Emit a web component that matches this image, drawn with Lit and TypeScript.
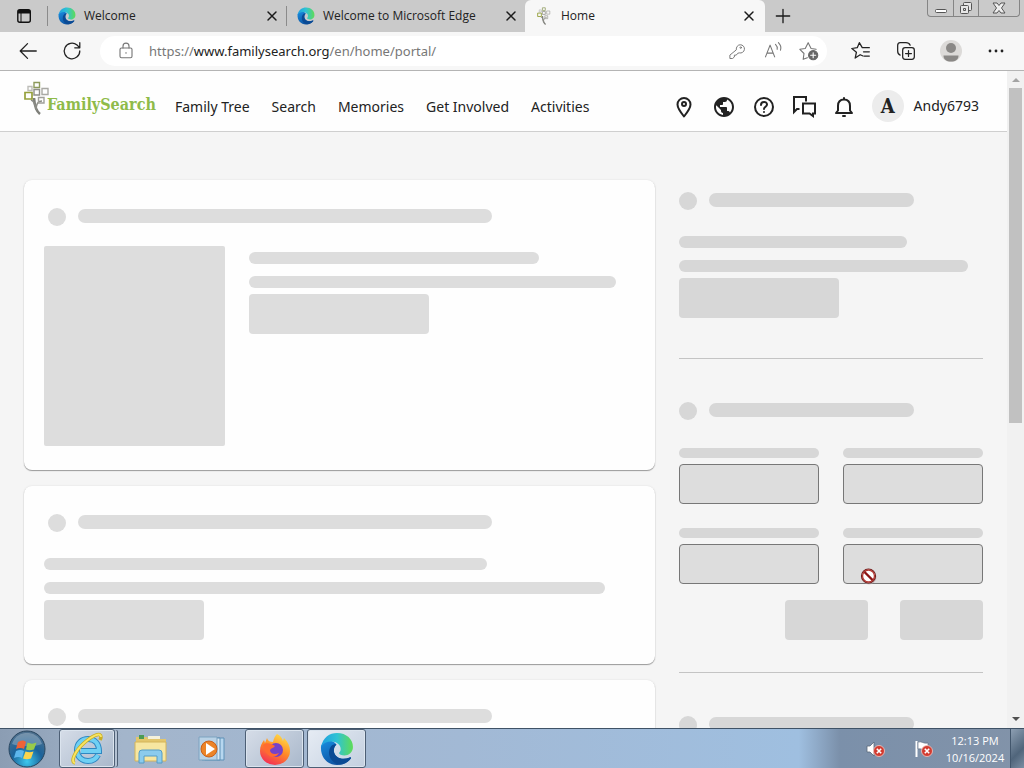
import { LitElement, html, css, svg } from "lit";
import { customElement, property } from "lit/decorators.js";

const edgeLogo = (size: number) => html`<svg width=${size} height=${size} viewBox="0 0 32 32" aria-hidden="true">
  <defs>
    <linearGradient id="ea" x1="0" y1="0.3" x2="1" y2="0.3"><stop offset="0" stop-color="#1f9fe0"/><stop offset=".5" stop-color="#2fc3d4"/><stop offset="1" stop-color="#5fdc55"/></linearGradient>
    <linearGradient id="eb" x1="0" y1="0" x2="0.6" y2="1"><stop offset="0" stop-color="#1a8ee0"/><stop offset="1" stop-color="#0c4f9e"/></linearGradient>
  </defs>
  <path fill="url(#eb)" d="M1 13C0 24 7 31 16 31c6 0 10-2 13-6 .5-1-.3-1.4-1-1-7 3-14 0-15-6-.4-3 1-5 2.500-6C13 7 4 6 1 13z"/>
  <path fill="#0a4a94" d="M10 14c-4 6 0 16 9 16.700 5-.7 8-3 10-5.700.5-1-.3-1.400-1-1-8 3-14 0-15-6 0-3 1-5 2.500-6-2-1-4 0-5.500 2z"/>
  <path fill="url(#ea)" d="M1 14C3 5 9 1 16 1c9 0 15 6 15 13 0 5-4 8-8 8-3 0-5-1-5-2s1.500-1.500 1.500-4c0-4-4-7-9-7-4 0-7.500 1.500-9.500 5z"/>
</svg>`;

const treeMark = (w: number, h: number) => html`<svg width=${w} height=${h} viewBox="0 0 26 34" fill="none" aria-hidden="true">
  <path d="M10 17c.5 7 2 13 6 16" stroke="#7e7f79" stroke-width="2.600"/>
  <path d="M18 20c-4 0-6 3-6 9M7 19c3 1 4 4 5 8" stroke="#8b8c86" stroke-width="1.500"/>
  <g stroke-width="1.400">
    <path d="M10 1.500h5.500v5H10z" stroke="#8d9a5b"/>
    <path d="M4 5.500h4v4H4z" stroke="#bdbdb8"/>
    <path d="M10 8.500h5.500v5.500H10z" stroke="#8f8f88"/>
    <path d="M18 7.500h6v6h-6z" stroke="#a9a9a4"/>
    <path d="M1 11.500h7v6.500H1z" stroke="#95a03b" stroke-width="1.700"/>
    <path d="M14.500 16.500h5.500V22h-5.500z" stroke="#a0a09a"/>
  </g>
</svg>`;

const line = (size: number, body: unknown, width = "1.2") => html`<svg width=${size} height=${size} viewBox="0 0 24 24" fill="none"
  stroke="currentColor" stroke-width=${width} stroke-linecap="round" stroke-linejoin="round" aria-hidden="true">${body}</svg>`;

const badX = svg`<circle cx="14" cy="12" r="5.500" fill="#d23b30" stroke="#f3c9c4" stroke-width=".8"/><path d="m11.800 9.800 4.400 4.400m0-4.400-4.400 4.400" stroke="#fff" stroke-width="1.600"/>`;

@customElement("browser-tabs")
class BrowserTabs extends LitElement {
  static styles = css`
    :host { display: block; background: #cacaca; }
    .strip { display: flex; height: 32px; position: relative; }
    .workspace { width: 47px; display: grid; place-items: center; }
    button { border: 0; padding: 0; background: none; color: #1b1b1b; display: grid; place-items: center; font: inherit; }
    .tab { flex: 0 1 239px; display: flex; align-items: center; gap: 8px; padding: 0 6px 0 10px; box-sizing: border-box; color: #222; border-left: 1px solid #8b8b8b; border-image: linear-gradient(transparent 20%, #8b8b8b 20% 80%, transparent 80%) 1; }
    .tab.active { background: #f7f7f7; border: 0; border-radius: 6px 6px 0 0; flex-basis: 240px; padding: 0 8px 0 10px; }
    .title { flex: 1; font: 12px/16px "Open Sans", "Noto Sans", sans-serif; white-space: nowrap; }
    .new { width: 36px; }
    .window { position: absolute; right: 4px; top: 0; display: flex; border: 1px solid #858585; border-top: 0; border-radius: 0 0 4px 4px; color: #555; height: 16px; }
    .window button { width: 25px; color: #555; }
    .window button + button { border-left: 1px solid #858585; }
    .window .shut { width: 41px; }
  `;
  render() {
    const close = line(16, svg`<path d="M6 6l12 12M18 6 6 18"/>`, "2.2");
    const tab = (title: string, icon: unknown, active = false) => html`
      <div class="tab ${active ? "active" : ""}" role="tab" aria-selected=${active}>
        ${icon}<span class="title">${title}</span><button aria-label="Close ${title}">${close}</button>
      </div>`;
    return html`<div class="strip" role="tablist">
      <button class="workspace" aria-label="Tab actions">
        <svg width="16" height="16" viewBox="0 0 16 16"><rect x="1.800" y="1.800" width="12.500" height="12.500" rx="2" fill="none" stroke="#111" stroke-width="1.400"/><path d="M2 2h12v3.500H2z" fill="#111"/><path d="M5 5v9" stroke="#111"/></svg>
      </button>
      ${tab("Welcome", edgeLogo(18))}
      ${tab("Welcome to Microsoft Edge", edgeLogo(18))}
      ${tab("Home", treeMark(18, 18), true)}
      <button class="new" aria-label="New tab">${line(20, svg`<path d="M12 4v16M4 12h16"/>`, "1.6")}</button>
      <div class="window">
        <button aria-label="Minimize"><svg width="14" height="14" viewBox="0 0 14 14" fill="#fff" stroke="#555"><rect x="1.500" y="8.500" width="11" height="3" rx="1"/></svg></button>
        <button aria-label="Restore"><svg width="14" height="14" viewBox="0 0 14 14" fill="#e6e6e6" stroke="#555"><rect x="4.500" y="1.500" width="8" height="8" rx="1"/><rect x="1.500" y="4.500" width="8" height="8" rx="1"/><path d="M4.500 7.500h2v2h-2z"/></svg></button>
        <button class="shut" aria-label="Close window"><svg width="14" height="14" viewBox="0 0 14 14" fill="#eee" stroke="#555"><path d="M1 2h4l2 2.500L9 2h4L9.500 7l3.500 5H9L7 9.500 5 12H1l3.500-5z"/></svg></button>
      </div>
    </div>`;
  }
}

@customElement("browser-toolbar")
class BrowserToolbar extends LitElement {
  static styles = css`
    :host { display: block; background: #f7f7f7; border-bottom: 1px solid #b4b4b4; }
    .bar { display: flex; align-items: center; height: 38px; padding-left: 16px; }
    button { border: 0; padding: 0; background: none; color: #222; display: grid; place-items: center; width: 24px; height: 24px; }
    .nav { display: flex; gap: 20px; }
    .address { flex: 1; display: flex; align-items: center; background: #fff; border-radius: 15px; height: 30px; margin-left: 16px; padding: 0 6px 0 14px; position: relative; }
    .address button { color: #777; }
    .field { flex: 1; position: relative; height: 20px; margin-left: 11px; font: 13px/20px "Noto Sans", "Open Sans", sans-serif; }
    .field input { width: 100%; box-sizing: border-box; height: 20px; border: 0; padding: 0; outline: 0; background: transparent; font: inherit; color: transparent; }
    .url { position: absolute; inset: 0; color: #777; white-space: nowrap; pointer-events: none; }
    .url b { color: #222; font-weight: 400; }
    .inner { display: flex; gap: 12px; }
    .tools { display: flex; gap: 21px; margin: 0 16px 0 22px; }
  `;
  render() {
    return html`<div class="bar">
      <div class="nav">
        <button aria-label="Back">${line(22, svg`<path d="M21 12H4m7.500-8L3.500 12l8 8"/>`, "1.4")}</button>
        <button aria-label="Refresh">${line(22, svg`<path d="M20.500 12a8.500 8.500 0 1 1-3-6.500L20 8m.5-5v5.500H15"/>`, "1.4")}</button>
      </div>
      <div class="address">
        <button aria-label="Site information">${line(18, svg`<rect x="4" y="8" width="16" height="13" rx="2"/><path d="M8 8V5.500a4 4 0 0 1 8 0V8M12 14v1"/>`, "1.5")}</button>
        <div class="field">
          <input aria-label="Address" readonly />
          <span class="url">https://<b>www.familysearch.org</b>/en/home/portal/</span>
        </div>
        <div class="inner">
          <button aria-label="Passwords">${line(18, svg`<path d="M11 10a5.500 5.500 0 1 1 4 4.500l-2 .5-2 2.500H8.500V20L6 22H2.500v-4z"/><circle cx="17" cy="7.500" r="1"/>`, "1.3")}</button>
          <button aria-label="Read aloud">${line(20, svg`<path d="M3 19 8.500 5 14 19M5 14.500h7M15 4c2 2 2.500 4 2 6M18.500 2c3 3 3.500 6 2.500 9"/>`, "1.3")}</button>
          <button aria-label="Add to favorites">${line(20, svg`<path d="M10 20l-5 2 1-7-5-5 6.500-1L11 2l3.500 7 6 1"/><circle cx="17" cy="17" r="5.500" fill="#666" stroke="#666"/><path d="M17 14v6m-3-3h6" stroke="#fff"/>`, "1.3")}</button>
        </div>
      </div>
      <div class="tools">
        <button aria-label="Favorites">${line(20, svg`<path d="m14.500 18-3.500-1.500-6 4 1.500-7L1 9l6.500-1L10 2l3.500 6H22M15 13h7m-6 5h6"/>`, "1.5")}</button>
        <button aria-label="Collections">${line(20, svg`<rect x="8" y="8" width="14" height="14" rx="3"/><path d="M15 11.500v7m-3.500-3.500h7M5 17c-3-1-3-3-3-5V5.500C2 3.500 3 2 5 2h7c3 0 4 1 5 3"/>`, "1.5")}</button>
        <button aria-label="Profile"><svg width="24" height="24" viewBox="0 0 24 24"><circle cx="12" cy="12" r="11" fill="#dcdad8"/><circle cx="12" cy="9" r="5" fill="#8a8886"/><path d="M4.500 16.500h15c0 4-3 6-7.500 6s-7.500-2-7.500-6z" fill="#8a8886"/></svg></button>
        <button aria-label="Settings and more"><svg width="18" height="18" viewBox="0 0 18 18" fill="#222"><circle cx="3" cy="9" r="1.400"/><circle cx="9" cy="9" r="1.400"/><circle cx="15" cy="9" r="1.400"/></svg></button>
      </div>
    </div>`;
  }
}

@customElement("site-header")
class SiteHeader extends LitElement {
  static styles = css`
    :host { display: block; background: #fefefe; border-bottom: 1px solid #cfcfcf; font: 14px/20px "Noto Sans", "Open Sans", sans-serif; color: #222; }
    header { display: flex; align-items: center; height: 60px; padding: 0 28px 0 24px; }
    .logo { display: flex; align-items: center; text-decoration: none; color: #8fbb49; font: 700 16px/24px "DejaVu Serif Condensed", "DejaVu Serif", serif; width: 131px; }
    .logo svg { margin: -6px -3px 0 0; flex: none; }
    .logo span { margin-top: 8px; }
    nav { display: flex; gap: 22px; margin-left: 20px; flex: 1; margin-top: 12px; }
    nav a { color: inherit; text-decoration: none; white-space: nowrap; }
    .actions { display: flex; gap: 16px; margin-top: 12px; }
    button { border: 0; padding: 0; background: none; color: inherit; font: inherit; display: flex; align-items: center; }
    .user { gap: 10px; margin: 10px 0 0 16px; }
    .avatar { width: 32px; height: 32px; border-radius: 50%; background: #ececec; display: grid; place-items: center; font: 700 20px/32px "DejaVu Serif Condensed", "DejaVu Serif", serif; }
  `;
  render() {
    const links = ["Family Tree", "Search", "Memories", "Get Involved", "Activities"];
    return html`<header>
      <a class="logo" href="#" aria-label="FamilySearch">${treeMark(26, 34)}<span>FamilySearch</span></a>
      <nav>${links.map((l) => html`<a href="#">${l}</a>`)}</nav>
      <div class="actions">
        <button aria-label="Locations">${line(24, svg`<path d="M12 21.500C8 16.500 5.500 13 5.500 9.500a6.500 6.500 0 0 1 13 0c0 3.500-2.500 7-6.500 12z"/><circle cx="12" cy="9" r="2"/>`, "2")}</button>
        <button aria-label="Language">${line(24, svg`<path stroke="none" fill="currentColor" d="M12 2C6.480 2 2 6.480 2 12s4.480 10 10 10 10-4.480 10-10S17.520 2 12 2zm-1 17.930c-3.950-.49-7-3.850-7-7.930 0-.62.080-1.210.21-1.790L9 15v1c0 1.100.9 2 2 2v1.930zm6.900-2.540c-.26-.81-1-1.390-1.900-1.390h-1v-3c0-.55-.45-1-1-1H8v-2h2c.55 0 1-.45 1-1V7h2c1.100 0 2-.9 2-2v-.41c2.930 1.190 5 4.060 5 7.410 0 2.080-.8 3.970-2.100 5.390z"/>`, "2")}</button>
        <button aria-label="Help">${line(24, svg`<circle cx="12" cy="12" r="9"/><path d="M9 10c0-4 6-4 6-.5 0 2-3 2.500-3 4.500M12 17v.1"/>`, "2")}</button>
        <button aria-label="Messages">${line(24, svg`<path stroke-linejoin="miter" stroke-linecap="butt" d="M7.500 14H5l-3 3V2h12v4.500M11 8.500h12v10h-2V21l-3.500-2.500H11z"/>`, "2")}</button>
        <button aria-label="Notifications">${line(24, svg`<path d="M4 18h16l-2-2.500V11c0-4-2-6.500-6-6.500S6 7 6 11v4.500zM12 3v1M11 21h2"/>`, "2")}</button>
      </div>
      <button class="user"><span class="avatar">A</span><span>Andy6793</span></button>
    </header>`;
  }
}

@customElement("skeleton-block")
class SkeletonBlock extends LitElement {
  @property() kind = "lines";
  static styles = css`
    :host { display: block; --fill: var(--skeleton, #ddd); }
    .heading { display: flex; align-items: center; gap: 12px; height: 18px; margin-bottom: 20px; }
    .dot { width: 18px; height: 18px; border-radius: 50%; background: var(--fill); }
    .title { height: 14px; width: var(--title, 70%); border-radius: 7px; background: var(--fill); margin-bottom: 2px; }
    .lines { display: flex; flex-direction: column; align-items: flex-start; gap: 12px; padding-top: 6px; }
    .text { height: 12px; border-radius: 6px; background: var(--fill); width: 75%; }
    .long { width: 95%; }
    .box { width: var(--box, 160px); height: 40px; border-radius: 4px; background: var(--fill); margin-top: -6px; }
  `;
  render() {
    return this.kind === "heading"
      ? html`<div class="heading"><div class="dot"></div><div class="title"></div></div>`
      : html`<div class="lines"><div class="text"></div><div class="text long"></div><div class="box"></div></div>`;
  }
}

@customElement("home-page")
class HomePage extends LitElement {
  static styles = css`
    :host { display: block; background: #f5f5f5; }
    main { display: grid; grid-template-columns: minmax(0, 1fr) 304px; gap: 24px; padding: 48px 24px 0; }
    .feed { display: flex; flex-direction: column; gap: 16px; }
    .card { background: #fefefe; border-radius: 8px; padding: 28px 20px 24px; box-shadow: 0 1px 1px #999, 0 0 2px #ddd; }
    .card .head { margin: 0 -4px 0 4px; }
    .media { display: grid; grid-template-columns: 181px 1fr; gap: 24px; --box: 180px; }
    .picture { height: 200px; background: #ddd; border-radius: 2px; }
    aside { padding-top: 12px; --skeleton: #d7d7d7; --title: 205px; }
    hr { border: 0; border-top: 1px solid #c4c4c4; margin: 40px 0 43px; }
    .form { display: grid; grid-template-columns: 1fr 1fr; gap: 24px; padding-top: 8px; }
    .form label { display: flex; flex-direction: column; gap: 6px; position: relative; }
    .form label span { height: 10px; border-radius: 5px; background: #d7d7d7; }
    .form input { width: 100%; height: 40px; box-sizing: border-box; border: 1px solid #777; border-radius: 4px; background: #ddd; margin: 0; }
    .buttons { display: flex; justify-content: flex-end; gap: 32px; margin-top: 16px; }
    .buttons button { width: 83px; height: 40px; border: 0; border-radius: 4px; background: #d7d7d7; }
    .buttons + hr { margin-top: 32px; }
    .pointer { position: absolute; left: 16px; bottom: -2px; }
  `;
  render() {
    const head = html`<skeleton-block class="head" kind="heading"></skeleton-block>`;
    const lines = html`<skeleton-block></skeleton-block>`;
    const field = (name: string, extra: unknown = "") => html`<label><span></span><input aria-label=${name} disabled />${extra}</label>`;
    const pointer = html`<svg class="pointer" width="20" height="20" viewBox="0 0 20 20" fill="none" aria-hidden="true"><circle cx="10" cy="11" r="7.500" fill="#b9a5a5" opacity=".5"/><circle cx="9.500" cy="10" r="7" fill="#fff" stroke="#6b1d1d" stroke-width="1.200"/><circle cx="9.500" cy="10" r="6" stroke="#b33a34" stroke-width="1.400"/><path d="m5.500 6 8 8" stroke="#8c1414" stroke-width="2.400"/></svg>`;
    return html`<main>
      <div class="feed">
        <section class="card">${head}<div class="media"><div class="picture"></div>${lines}</div></section>
        <section class="card">${head}${lines}</section>
        <section class="card">${head}${lines}</section>
      </div>
      <aside>
        ${head}${lines}
        <hr />
        ${head}
        <div class="form">${field("First names")}${field("Last names")}${field("Place")}${field("Birth year", pointer)}</div>
        <div class="buttons"><button aria-label="More options" disabled></button><button aria-label="Search" disabled></button></div>
        <hr />
        ${head}${lines}
      </aside>
    </main>`;
  }
}

@customElement("task-bar")
class TaskBar extends LitElement {
  static styles = css`
    :host { display: block; border-top: 1px solid #3f5266; background: linear-gradient(90deg, #8b9db3 0, #a3b5cb 12%, #a2b9d5 45%, #9fbfe0 78%, #7b90aa 82%, #8293a9 100%); }
    .bar { display: flex; align-items: center; height: 39px; }
    button { border: 0; padding: 0; background: none; display: grid; place-items: center; }
    .start { width: 54px; height: 39px; margin-right: 5px; }
    .apps { display: flex; flex: 1; gap: 3px; }
    .app { width: 59px; height: 39px; box-sizing: border-box; }
    .open { border: 1px solid #4d5f75; border-radius: 3px; background: linear-gradient(135deg, #d6dde8, #a9b8cb); box-shadow: inset 0 0 0 1px #dbe4ee; }
    .stacked { width: 56px; margin-right: 3px; box-shadow: inset 0 0 0 1px #dbe4ee, 3px 0 0 -1px #b4c2d3, 4px 0 0 -1px #4d5f75; }
    .current { background: linear-gradient(135deg, #e6ecf4, #c3cfdf); }
    .tray { display: flex; align-items: center; }
    .status { width: 48px; height: 39px; padding-left: 4px; }
    .clock { font: 11px/17px "Open Sans", "Noto Sans", sans-serif; color: #fff; text-align: center; width: 60px; white-space: nowrap; }
    .peek { width: 14px; height: 39px; margin-left: 5px; border-left: 1px solid #42566c; background: linear-gradient(135deg, #8d9fb3, #50657b 60%, #7b8ea3); }
  `;
  render() {
    return html`<div class="bar">
      <button class="start" aria-label="Start">
        <svg width="38" height="38" viewBox="0 0 38 38"><defs><radialGradient id="o" cx=".5" cy=".85" r=".85"><stop offset="0" stop-color="#3cc8ee"/><stop offset=".5" stop-color="#1b639a"/><stop offset="1" stop-color="#52718d"/></radialGradient></defs>
          <circle cx="19" cy="19" r="18" fill="url(#o)" stroke="#29465f"/><path d="M4 14C7 5 14 3 19 3s12 2 15 11c-7 3-23 3-30 0z" fill="#fff" opacity=".25"/>
          <path d="M10 12c3-2 6-2 8 0l-2 7c-2-1.500-5-1.500-8 0z" fill="#ee6337"/><path d="M19.500 12.500c3 1.500 6 1.500 9 0l-2.500 7c-3 1-5.500 1-8 0z" fill="#98cb4a"/><path d="M8 21c3-1.500 5.500-1.500 8 0l-2 7c-2-1.500-5-1.500-8 0z" fill="#5db6ec"/><path d="M17.500 21.500c2.500 1 5 1 8 0l-2.500 7c-3 1-5.500 1-8 0z" fill="#fbd44c"/></svg>
      </button>
      <div class="apps">
        <button class="app open stacked" aria-label="Internet Explorer"><svg width="34" height="34" viewBox="0 0 34 34" fill="none"><path d="M28 23c-2 4-5 6-10 6-6 0-11-4-11-11S12 7 18 7c7 0 11 5 11 12H11" stroke="#2f88c2" stroke-width="6"/><path d="M28 23c-2 4-5 6-10 6-6 0-11-4-11-11S12 7 18 7c7 0 11 5 11 12H11" stroke="#6fd0f4" stroke-width="4"/><path d="M5 31C0 30 5 19 14 11S31 0 31 5c0 1-.5 2-1 3" stroke="#c9ae22" stroke-width="3.500"/><path d="M5 31C0 30 5 19 14 11S31 0 31 5" stroke="#f7e463" stroke-width="2"/></svg></button>
        <button class="app" aria-label="Windows Explorer"><svg width="34" height="30" viewBox="0 0 34 30"><path d="M2 3h11l2 2h17v22H2z" fill="#e3c66c"/><path d="M5 1h5v4H5z" fill="#4c9b54"/><path d="M14 2h12v3H14z" fill="#f4f1dc"/><path d="M1 8h31v19H1z" fill="#f7e6a1" stroke="#d4b45a"/><path d="M5 29V19q0-3 3-3h17q3 0 3 3v10h-5v-7H10v7z" fill="#8bcbed" stroke="#549cc6"/></svg></button>
        <button class="app" aria-label="Media Player"><svg width="30" height="26" viewBox="0 0 30 26"><path d="M7 2h19v22H7z" fill="#b7d7ef" stroke="#5e91b7"/><path d="M4 2h18v22H4z" fill="#d9e9f5" stroke="#5e91b7"/><path d="M1 1h18v23H1z" fill="#b9d2e6" stroke="#7da3c0"/><circle cx="11" cy="13" r="8" fill="#ec8428" stroke="#c9601a"/><path d="m8 7 9 6-9 6z" fill="#fff"/></svg></button>
        <button class="app open" aria-label="Firefox"><svg width="32" height="32" viewBox="0 0 32 32"><defs><linearGradient id="f" x1=".8" y1="0" x2=".3" y2="1"><stop offset="0" stop-color="#ffe34a"/><stop offset=".5" stop-color="#ff8a26"/><stop offset="1" stop-color="#f42d55"/></linearGradient></defs><path d="M18 1c4 2 5 4 6 7l1-3c4 4 6 8 6 13a15 14 0 0 1-30 0c0-5 2-8 4-11l1 3 2-5c1 3 3 4 6 4 1-4 2-6 4-8z" fill="url(#f)"/><circle cx="17" cy="17" r="7" fill="#7542c8"/><path d="M4 12c3-3 8-2 12 1-1 2-4 2-5 4 0 4 5 5 9 3-3 6-13 6-16-8z" fill="#ff6b30"/></svg></button>
        <button class="app open current" aria-label="Microsoft Edge">${edgeLogo(34)}</button>
      </div>
      <div class="tray">
        <button class="status" aria-label="Volume muted"><svg width="20" height="20" viewBox="0 0 20 20"><path d="M2 7h3l4-4v14l-4-4H2z" fill="#fff" stroke="#58677a" stroke-width=".8"/>${badX}</svg></button>
        <button class="status" aria-label="Action Center"><svg width="20" height="20" viewBox="0 0 20 20"><path d="M3.500 2v16" stroke="#fff" stroke-width="2"/><path d="M5 3c4-1 5 2 10 1v7c-5 1-6-2-10-1z" fill="#fff" stroke="#58677a" stroke-width=".6"/>${badX}</svg></button>
        <div class="clock"><div>12:13 PM</div><div>10/16/2024</div></div>
        <button class="peek" aria-label="Show desktop"></button>
      </div>
    </div>`;
  }
}

@customElement("app-root")
class AppRoot extends LitElement {
  static styles = css`
    :host { display: flex; flex-direction: column; height: 100vh; overflow: hidden; }
    .view { flex: 1; min-height: 0; display: flex; }
    .page { flex: 1; min-width: 0; overflow: hidden; background: #f5f5f5; }
    .scroll { width: 17px; box-sizing: border-box; background: #f1f1f1; display: flex; flex-direction: column; align-items: center; padding: 6px 1px; }
    .thumb { width: 13px; height: 52%; background: #c1c1c1; margin: 6px 0 auto; }
  `;
  render() {
    return html`
      <browser-tabs></browser-tabs>
      <browser-toolbar></browser-toolbar>
      <div class="view">
        <div class="page"><site-header></site-header><home-page></home-page></div>
        <div class="scroll" aria-hidden="true">
          <svg width="8" height="5" viewBox="0 0 8 5"><path d="M0 5 4 1l4 4z" fill="#a3a3a3"/></svg>
          <div class="thumb"></div>
          <svg width="8" height="5" viewBox="0 0 8 5"><path d="m0 0 4 4 4-4z" fill="#505050"/></svg>
        </div>
      </div>
      <task-bar></task-bar>`;
  }
}
